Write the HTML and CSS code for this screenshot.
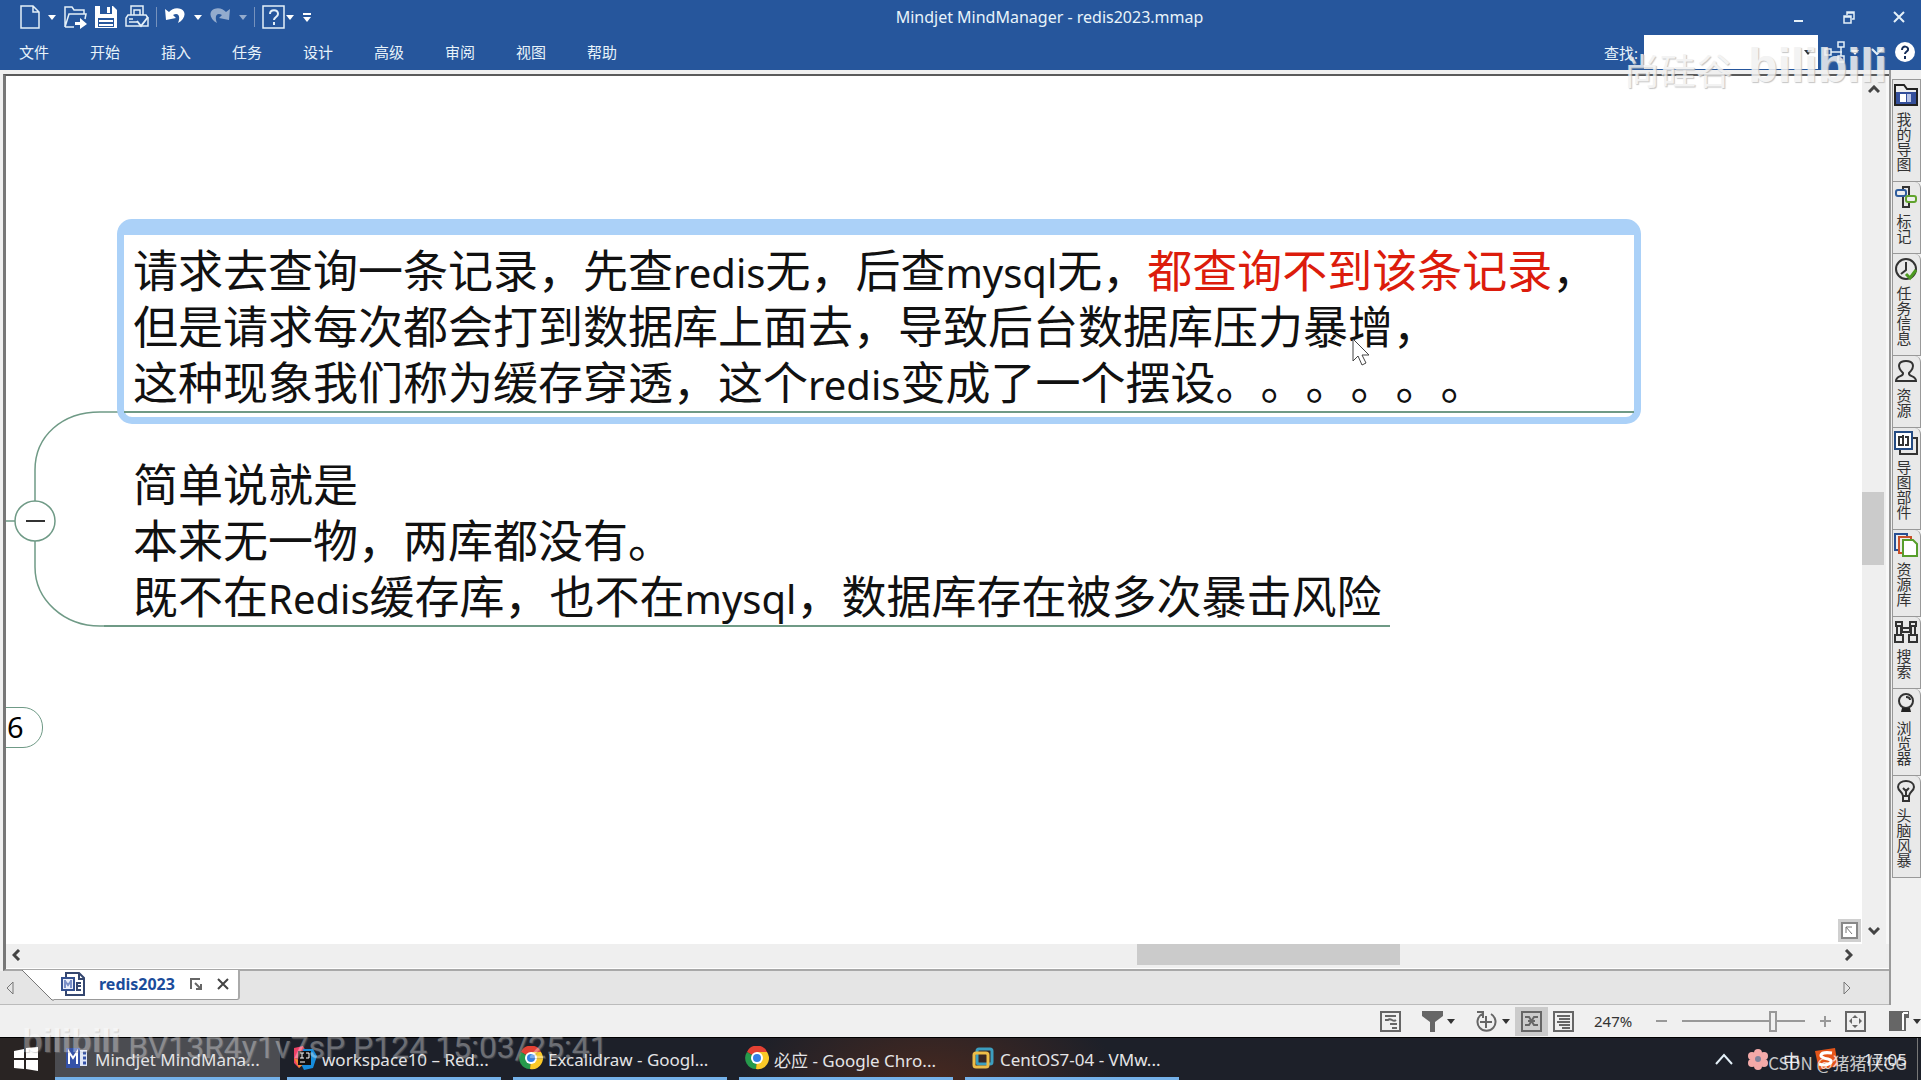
FILE: index.html
```html
<!DOCTYPE html>
<html lang="zh-CN">
<head>
<meta charset="utf-8">
<title>Mindjet MindManager - redis2023.mmap</title>
<link rel="stylesheet" href="styles.css">
</head>
<body>
<header class="ribbon">
  <div class="titlebar">
    <div class="quick">
      <button class="tool split" aria-label="新建"><svg width="20" height="24" viewBox="0 0 20 24"><path d="M1 1h12l6 6v16H1zM13 1v6h6" class="line"/></svg><i class="caret"></i></button>
      <button class="tool" aria-label="打开"><svg width="24" height="24" viewBox="0 0 24 24"><path d="M2 22V2h7l2 3h10v4M2 22L6 9h17l-1 5M2 22h9" class="line"/><path d="M12 17h5v-4l7 6-7 5v-4h-5z" class="solid"/></svg></button>
      <button class="tool" aria-label="保存"><svg width="24" height="24" viewBox="0 0 24 24"><path d="M1 1h18l4 4v18H1z" class="solid"/><path d="M6 1h12v8H6zM4 13h16v9H4z" class="blue"/><path d="M13 2h3v6h-3zM5 15h14v2H5zM5 19h14v2H5z" class="solid"/></svg></button>
      <button class="tool" aria-label="打印"><svg width="24" height="24" viewBox="0 0 24 24"><path d="M6 10V1h12v9M9 10V5h6v5M3 10h18l2 3v8H1v-8zM4 14h4M4 17h8" class="line"/><path d="M12 16l4 5 7-9" class="line thick"/></svg></button>
      <span class="rule"></span>
      <button class="tool split" aria-label="撤销"><svg width="22" height="20" viewBox="0 0 22 20"><path d="M1 2l1 11 10-2-3-3c5-3 8 1 5 8 7-4 9-11 3-14C12 0 8 2 5 5z" class="solid"/></svg><i class="caret"></i></button>
      <button class="tool split faded" aria-label="重做"><svg width="22" height="20" viewBox="0 0 22 20"><path d="M21 2l-1 11-10-2 3-3C8 5 5 9 8 16 1 12-1 5 5 2c5-2 9 0 12 3z" class="solid"/></svg><i class="caret"></i></button>
      <span class="rule"></span>
      <button class="tool split tight" aria-label="帮助主题"><svg width="23" height="24" viewBox="0 0 23 24"><path d="M1 1h21v22H1z" class="line"/><path d="M8 9c0-5 8-5 8 0 0 3-4 3-4 6M12 17v3" class="line thick"/></svg><i class="caret"></i></button>
      <button class="tool more" aria-label="自定义"><i class="dash"></i><i class="caret"></i></button>
    </div>
    <h1 class="title">Mindjet MindManager - redis2023.mmap</h1>
    <div class="window-buttons">
      <button aria-label="最小化"><svg width="12" height="14"><path d="M1 11h9" class="line thick"/></svg></button>
      <button aria-label="还原"><svg width="12" height="14" viewBox="0 0 12 14"><path d="M1 6h7v7H1zM1 7h7M4 5V2h7v7H9M4 3h7" class="line"/></svg></button>
      <button aria-label="关闭"><svg width="12" height="14" viewBox="0 0 12 14"><path d="M1 2l10 10M11 2L1 12" class="line thick"/></svg></button>
    </div>
  </div>
  <div class="menubar">
    <nav class="menu">
      <button>文件</button><button>开始</button><button>插入</button><button>任务</button><button>设计</button><button>高级</button><button>审阅</button><button>视图</button><button>帮助</button>
    </nav>
    <div class="find">
      <label for="find">查找:</label>
      <div class="findbox"><input id="find" type="text"><i class="caret dark"></i></div>
      <button class="tool split" aria-label="导图结构"><svg width="22" height="22" viewBox="0 0 22 22"><path d="M1 8h6v6H1zM14 1h6v5h-6zM14 15h6v6h-6zM7 11h11M17 6v9" class="line"/></svg><i class="caret"></i></button>
      <button class="tool" aria-label="折叠功能区"><svg width="12" height="8"><path d="M1 1l5 5 5-5" class="line thick"/></svg></button>
      <button class="tool" aria-label="帮助"><svg width="20" height="20" viewBox="0 0 20 20"><circle cx="10" cy="10" r="10" class="solid"/><path d="M7 8c0-5 7-4 6 0-1 2-3 2-3 4M10 14v3" class="navy"/></svg></button>
    </div>
  </div>
</header>

<div class="workspace">
  <main class="document">
    <div class="frame">
      <div class="viewport">
        <section class="map">
          <svg class="links" width="120" height="700" aria-hidden="true">
            <path d="M0 445h10M29 426v-32C29 360 56 336 94 336h20M29 464v27C29 524 58 550 94 550h20"/>
            <circle cx="29" cy="445" r="20"/><path d="M20 445h19" class="minus"/>
          </svg>
          <article class="topic selected">
            <p>请求去查询一条记录，先查<span>redis</span>无，后查<span>mysql</span>无，<em>都查询不到该条记录</em>，</p>
            <p>但是请求每次都会打到数据库上面去，导致后台数据库压力暴增，</p>
            <p>这种现象我们称为缓存穿透，这个<span>redis</span>变成了一个摆设。。。。。。</p>
          </article>
          <article class="topic plain">
            <p>简单说就是</p>
            <p>本来无一物，两库都没有。</p>
            <p>既不在<span>Redis</span>缓存库，也不在<span>mysql</span>，数据库存在被多次暴击风险</p>
          </article>
          <div class="count">6</div>
          <svg class="pointer" width="19" height="28" viewBox="0 0 19 28" aria-hidden="true"><path d="M1 1v22l5-5 4 9 4-2-4-8h7z"/></svg>
          <button class="corner" aria-label="导航"><svg width="17" height="17" viewBox="0 0 17 17"><path d="M1 1h15v15H1z" fill="#fff" stroke="#888" stroke-width="2"/><path d="M5 11V5h6M5 5l6 7" class="thin"/></svg></button>
        </section>
        <div class="vscroll"><svg width="12" height="9"><path d="M1 7l5-5 5 5" class="arrow"/></svg><div class="vtrack"><i class="thumb"></i></div><svg width="12" height="9"><path d="M1 2l5 5 5-5" class="arrow"/></svg></div>
      </div>
      <div class="hscroll"><svg width="9" height="12"><path d="M7 1L2 6l5 5" class="arrow"/></svg><div class="track"><i class="thumb"></i></div><svg width="9" height="12"><path d="M2 1l5 5-5 5" class="arrow"/></svg></div>
    </div>
    <div class="doctabs">
      <svg class="prev" width="8" height="14"><path d="M7 1v12L1 7z" class="thin"/></svg>
      <svg class="slope" width="32" height="31" viewBox="0 0 32 31"><path d="M0 0l30 30h2V0z" fill="#fff"/><path d="M0 0l30 30h2" class="thin"/></svg>
      <div class="doctab">
        <svg width="24" height="24" viewBox="0 0 24 24"><path d="M5 1h13l5 5v17H5z" fill="#fff" stroke="#34466f" stroke-width="2"/><path d="M18 1v6h5M20 11h-4v7h4M16 14h4" fill="none" stroke="#34466f" stroke-width="2"/><path d="M1 6h12v12H1z" fill="#e8edfa" stroke="#34508f" stroke-width="2"/><path d="M4 8v8M10 8v8M4 9l3 4 3-4" stroke="#7b90c8" stroke-width="2" fill="none"/></svg>
        <b>redis2023</b>
        <button aria-label="浮动"><svg width="12" height="12"><path d="M1 11V1h9M5 5l6 6M11 6v5H6" class="grey"/></svg></button>
        <button aria-label="关闭文档"><svg width="12" height="12"><path d="M1 1l10 10M11 1L1 11" stroke="#444" stroke-width="2"/></svg></button>
      </div>
      <svg class="next" width="8" height="14"><path d="M1 1v12l6-6z" class="thin"/></svg>
    </div>
  </main>
  <aside class="panels">
    <button><svg width="24" height="24" viewBox="0 0 24 24"><path d="M1 22V2h9l3 4h10v16z" fill="#eee" stroke="#222" stroke-width="2"/><path d="M2 9h20v12H2z" fill="#344f9b"/><path d="M6 11h6v8H6z" fill="#fff"/><path d="M13 11h4v8h-4z" fill="#b9c4e6"/></svg><span>我的导图</span></button>
    <button><svg width="24" height="24" viewBox="0 0 24 24"><path d="M9 2h6v20H9z" class="ico"/><rect x="2" y="5" width="10" height="6" rx="2" fill="#eee" stroke="#2f5d9d" stroke-width="2"/><rect x="12" y="11" width="10" height="6" rx="2" fill="#eee" stroke="#61a32e" stroke-width="2"/></svg><span>标记</span></button>
    <button><svg width="24" height="24" viewBox="0 0 24 24"><circle cx="12" cy="12" r="10" class="ico"/><path d="M12 5v8l-5 4" class="ico"/><path d="M12 17l4 4 6-8" fill="none" stroke="#4c9a20" stroke-width="3"/></svg><span>任务信息</span></button>
    <button><svg width="24" height="24" viewBox="0 0 24 24"><path d="M2 22c0-6 8-4 7-8-7-7-4-12 3-12s10 5 3 12c-1 4 7 2 7 8z" class="ico"/></svg><span>资源</span></button>
    <button><svg width="24" height="24" viewBox="0 0 24 24"><path d="M6 7h17v16H6z" class="ico"/><path d="M1 1h17v17H1z" fill="#fff" stroke="#244b83" stroke-width="2"/><path d="M8 6H5v8h3M11 6h3v8h-3M9 4v11" class="ico"/></svg><span>导图部件</span></button>
    <button><svg width="24" height="24" viewBox="0 0 24 24"><path d="M1 1h12v16H1z" fill="#eee" stroke="#294f92" stroke-width="2"/><path d="M5 4h12v16H5z" fill="#eee" stroke="#c8512b" stroke-width="2"/><path d="M9 7h10l4 4v12H9z" fill="#fff" stroke="#579e2b" stroke-width="2"/></svg><span>资源库</span></button>
    <button><svg width="24" height="24" viewBox="0 0 24 24"><path d="M2 2h6v4H2zM16 2h6v4h-6zM3 6h4v9H3zM17 6h4v9h-4zM1 15h8v7H1zM15 15h8v7h-8zM8 8h8v4H8z" class="ico"/></svg><span>搜索</span></button>
    <button><svg width="24" height="24" viewBox="0 0 24 24"><circle cx="12" cy="9" r="7" class="ico"/><path d="M12 5c2 0 4 1 4 3" class="ico"/><path d="M8 16h8l1 4H7z" fill="#222"/></svg><span>浏览器</span></button>
    <button><svg width="24" height="24" viewBox="0 0 24 24"><path d="M9 17c0-4-5-5-5-9 0-8 16-8 16 0 0 4-5 5-5 9zM9 17v5h6v-5M9 9l3 3 3-3M12 12v5" class="ico"/></svg><span>头脑风暴</span></button>
  </aside>
</div>

<footer class="status">
  <button aria-label="备注"><svg width="21" height="21" viewBox="0 0 21 21"><path d="M1 1h19v19H1zM5 5h11M5 9h3c3-3 5 3 8 0M10 13h7M12 17h5" class="grey"/></svg></button>
  <button class="filter" aria-label="筛选"><svg width="21" height="21"><path d="M0 0h21v5l-8 6v10H8V11L0 5z" fill="#666"/></svg><i class="caret dark"></i></button>
  <button class="rotate" aria-label="显示"><svg width="23" height="23" viewBox="0 0 23 23"><path d="M7 4a9 9 0 1 0 9 0M2 2h6v6M11 6v12M5 12h12" class="grey"/></svg><i class="caret dark"></i></button>
  <button class="pressed" aria-label="导图视图"><svg width="21" height="21" viewBox="0 0 21 21"><path d="M1 1h19v19H1zM4 6h4l5 8h4M4 14h4l5-8h4M7 10h7" class="grey"/></svg></button>
  <button aria-label="大纲视图"><svg width="21" height="21" viewBox="0 0 21 21"><path d="M1 1h19v19H1zM4 5h13M6 8h11M4 11h13M6 14h11M9 17h8" class="grey"/></svg></button>
  <output class="percent">247%</output>
  <button aria-label="缩小"><svg width="11" height="11"><path d="M0 5h11" class="faint"/></svg></button>
  <input class="zoom" type="range" min="0" max="100" value="76" aria-label="缩放">
  <button aria-label="放大"><svg width="11" height="11"><path d="M0 5h11M5 0v11" class="faint"/></svg></button>
  <button class="fit" aria-label="适合窗口"><svg width="21" height="21" viewBox="0 0 21 21"><path d="M1 1h19v19H1z" class="grey"/><path d="M10 4l3 3H7zM10 17l3-3H7zM4 10l3-3v6zM17 10l-3-3v6z" fill="#666"/></svg></button>
  <button class="pane" aria-label="任务窗格"><svg width="20" height="20"><path d="M0 0h20v7h-3v13H0z" fill="#666"/><path d="M14 2v17M14 2h5" stroke="#fff" stroke-width="2"/></svg><i class="caret dark"></i></button>
</footer>

<div class="taskbar">
  <button class="start" aria-label="开始菜单"><svg width="24" height="24" viewBox="0 0 24 24"><path d="M0 4l10-2v9H0zM12 1l12-1v11H12zM0 13h10v9L0 21zM12 13h12v11l-12-2z" fill="#fff"/></svg></button>
  <button class="task active"><svg width="24" height="24" viewBox="0 0 24 24"><path d="M0 2h14v20H0z" fill="#3552a8"/><path d="M3 18V6l4 6 4-6v12" fill="none" stroke="#fff" stroke-width="2"/><path d="M14 4h7v16h-7z" fill="#dfe6f6"/><path d="M17 7h3M17 12h3M17 17h3" stroke="#3552a8" stroke-width="3"/></svg><span>Mindjet MindMana...</span></button>
  <button class="task"><svg width="24" height="24" viewBox="0 0 24 24"><path d="M1 2l9-2 4 7-8 15-5-5z" fill="#ee4264"/><path d="M10 3h10l4 7-4 12-9 2-3-6z" fill="#168ddd"/><path d="M1 12l5 10 6-5z" fill="#f48c35"/><path d="M5 5h13v14H5z" fill="#111"/><path d="M7 7h4M9 7v5M7 12h4M13 7h3v5h-3M7 16h5" fill="none" stroke="#fff"/></svg><span>workspace10 – Red...</span></button>
  <button class="task"><svg width="24" height="24" viewBox="0 0 24 24"><use href="#chrome"/></svg><span>Excalidraw - Googl...</span></button>
  <button class="task"><svg width="24" height="24" viewBox="0 0 24 24"><g id="chrome"><path d="M12 12L2 6a11 11 0 0 1 20 0z" fill="#e34133"/><path d="M12 12L2 6a11 11 0 0 0 9 17z" fill="#269a4c"/><path d="M12 12l-1 11A11 11 0 0 0 22 6H12z" fill="#fbc927"/><circle cx="12" cy="12" r="6" fill="#fff"/><circle cx="12" cy="12" r="4" fill="#347fe6"/></g></svg><span>必应 - Google Chro...</span></button>
  <button class="task"><svg width="24" height="24" viewBox="0 0 24 24"><rect x="6" y="3" width="15" height="15" rx="2" fill="none" stroke="#3c9ebf" stroke-width="3"/><rect x="3" y="7" width="14" height="14" rx="2" fill="none" stroke="#edbd48" stroke-width="3"/></svg><span>CentOS7-04 - VMw...</span></button>
  <div class="tray">
    <svg width="18" height="12"><path d="M1 11l8-9 8 9" class="line thick"/></svg>
    <svg width="22" height="22" viewBox="0 0 22 22"><g fill="#f4a9a8"><circle cx="11" cy="5" r="4"/><circle cx="5" cy="8" r="4"/><circle cx="17" cy="8" r="4"/><circle cx="5" cy="15" r="4"/><circle cx="17" cy="15" r="4"/><circle cx="11" cy="18" r="4"/><circle cx="11" cy="11" r="5"/></g><circle cx="11" cy="11" r="3" fill="#80829b"/></svg>
    <span class="ime">中</span>
    <svg width="24" height="22" viewBox="0 0 24 22"><path d="M1 3l20-3 3 18-19 4z" fill="#e45519"/><path d="M18 5c-14-2-14 5-4 6 8 2 0 8-9 5" fill="none" stroke="#fff" stroke-width="3"/></svg>
    <time class="clock">17:05</time>
  </div>
</div>

<div class="mark author">尚硅谷</div>
<div class="mark brand-top">bilibili</div>
<div class="mark brand-bottom"><b>bilibili</b><span>BV13R4y1v7sP P124 15:03/25:41</span></div>
<div class="mark credit">CSDN @猪猪侠GG</div>
</body>
</html>
```
FILE: styles.css
```css
* { box-sizing: border-box; }
body {
  margin: 0;
  position: relative;
  height: 100vh;
  display: flex;
  flex-direction: column;
  overflow: hidden;
  background: #f0f0f0;
  font-family: "Noto Sans", "Noto Sans CJK SC", sans-serif;
  font-size: 15px;
}
button {
  border: 0;
  padding: 0;
  margin: 0;
  background: none;
  color: inherit;
  font: inherit;
  display: flex;
  align-items: center;
}
svg { display: block; flex: none; }
.line, .arrow, .grey, .thin, .faint, .navy { fill: none; stroke-width: 2; }
.line { stroke: #e4f0f8; }
.line:not(.thick) { stroke-width: 1.5; }
.solid { fill: #fff; }
.blue { fill: #26569c; }
.navy { stroke: #152d59; }
.arrow { stroke: #444; stroke-width: 3; }
.grey { stroke: #666; }
.thin { stroke: #777; stroke-width: 1; }
.faint { stroke: #999; }
.ico { fill: none; stroke: #333; stroke-width: 2; }
.caret {
  width: 0;
  height: 0;
  border: 4px solid transparent;
  border-top: 5px solid #fff;
  border-bottom: 0;
}
.caret.dark { border-top-color: #333; }

/* Ribbon */
.ribbon { background: #26569c; color: #e8f3fa; height: 70px; flex: none; }
.titlebar { display: grid; grid-template-columns: 1fr auto 1fr; align-items: center; height: 34px; padding: 0 16px 0 20px; }
.quick { display: flex; align-items: center; gap: 7px; height: 30px; }
.split { gap: 8px; }
.split.tight { gap: 1px; }
.faded { opacity: .5; }
.rule { width: 1px; height: 20px; background: #7692bd; }
.more { flex-direction: column; gap: 2px; margin-left: 2px; }
.dash { width: 8px; height: 2px; background: #fff; }
.title { margin: 0 0 0 174px; font-size: 16px; font-weight: 400; line-height: 30px; white-space: nowrap; }
.window-buttons { display: flex; justify-content: flex-end; gap: 38px; }
.menubar { display: flex; justify-content: space-between; height: 36px; }
.menu { display: flex; align-items: center; padding-left: 19px; }
.menu button { width: 71px; font-family: "Noto Sans CJK SC", sans-serif; line-height: 36px; }
.find { display: flex; align-items: center; gap: 6px; padding-right: 6px; }
.find .tool { margin-right: 6px; }
.find .tool:last-child { margin: 0; }
.find .split { gap: 5px; }
.findbox { display: flex; align-items: center; background: #fff; width: 174px; height: 34px; padding-right: 6px; }
.findbox input { border: 0; padding: 0 6px; flex: 1; min-width: 0; background: none; outline: 0; }

/* Work area */
.workspace { flex: 1; min-height: 0; display: flex; }
.document { flex: 1; min-width: 0; display: flex; flex-direction: column; border-right: 2px solid #999; }
.frame {
  flex: 1;
  min-height: 0;
  display: flex;
  flex-direction: column;
  margin-top: 4px;
  margin-left: 3px;
  border-top: 2px solid #5a5a5a;
  border-left: 3px solid #777;
  border-bottom: 2px solid #a8a8a8;
}
.viewport { flex: 1; min-height: 0; display: flex; }
.map { flex: 1; min-width: 0; position: relative; overflow: hidden; background: #fff; }
.vscroll { width: 27px; padding: 9px 0; display: flex; flex-direction: column; align-items: center; background: #efefef; border-right: 3px solid #f8f8f8; }
.vtrack { flex: 1; width: 100%; display: flex; flex-direction: column; }
.vtrack::before { content: ""; flex: 21; }
.vtrack::after { content: ""; flex: 19; }
.vtrack .thumb { height: 73px; margin-right: 2px; background: #cbcbcb; }
.hscroll { display: flex; align-items: center; height: 25px; padding: 0 36px 3px 6px; background: #efefef; border-bottom: 1px solid #fff; }
.hscroll .track { flex: 1; display: flex; height: 21px; padding-left: calc(61% - 7px); }
.hscroll .thumb { width: 263px; background: #cbcbcb; }

/* Mind map */
.links { position: absolute; left: 0; top: 0; fill: none; stroke: #6f9a86; stroke-width: 2; }
.links path:not(.minus), .links circle { stroke-width: 1.5; }
.links circle { fill: #fff; }
.links .minus { stroke: #333; }
.topic { position: absolute; font-family: "Noto Sans CJK SC", sans-serif; font-size: 45px; color: #111; white-space: nowrap; text-spacing-trim: space-all; }
.topic p { margin: 0; height: 56px; line-height: 56px; }
.topic span { font-family: "Noto Sans", sans-serif; font-size: 40px; line-height: 40px; }
.topic em { font-style: normal; color: #dc1c0c; }
.selected { left: 111px; top: 143px; width: 1524px; height: 205px; padding: 6px 9px; border: 7px solid #abd1f8; border-top-width: 16px; border-radius: 15px; }
.selected::before { content: ""; position: absolute; inset: -4px -2px -2px; border: 4px solid #abd1f8; border-radius: 12px; z-index: -1; }
.selected::after { content: ""; position: absolute; left: 0; right: 0; bottom: 4px; height: 2px; background: #6f9a86; }
.plain { left: 98px; top: 379px; width: 1286px; height: 172px; padding: 0 29px; border-bottom: 2px solid #6f9a86; }
.count { position: absolute; left: -20px; top: 631px; width: 57px; height: 41px; padding-left: 20px; border: 1px solid #6f9a86; border-radius: 20px; font-size: 29px; line-height: 38px; }
.pointer { position: absolute; left: 1346px; top: 262px; fill: #fff; stroke: #444; }
.corner { position: absolute; right: 1px; bottom: 2px; padding: 3px; background: #d0d0d0; }

/* Document tabs */
.doctabs { height: 34px; display: flex; align-items: flex-start; background: #e5e5e5; border-bottom: 1px solid #bbb; }
.prev { margin: 10px 8px 0 6px; }
.slope { margin-top: -1px; }
.doctab { height: 30px; margin-top: -1px; display: flex; align-items: center; gap: 15px; padding: 0 9px 2px 7px; background: #fff; border-right: 2px solid #aaa; border-bottom: 1px solid #999; border-bottom-right-radius: 3px; color: #1b4c9b; font-size: 16px; }
.doctab b { margin-left: -1px; }
.next { margin: 10px 38px 0 auto; }

/* Side panels */
.panels { width: 30px; padding: 9px 0 0 1px; display: flex; flex-direction: column; }
.panels button {
  flex-direction: column;
  gap: 5px;
  padding: 3px 2px 9px 0;
  background: #e9e9e9;
  border: 1px solid #999;
  border-top: 0;
  color: #333;
}
.panels button:first-child { border-top: 1px solid #999; }
.panels button:not(:first-child) { border-top-right-radius: 6px; }
.panels span { writing-mode: vertical-rl; margin-right: 4px; font-family: "Noto Sans CJK SC", sans-serif; font-size: 15px; line-height: 20px; }

/* Status bar */
.status { height: 33px; flex: none; display: flex; align-items: center; justify-content: flex-end; border-bottom: 1px solid #000; }
.status button { gap: 4px; }
.filter { margin-left: 21px; }
.rotate { margin: 0 5px 0 20px; }
.status .pressed { background: #cbcbcb; padding: 4px 6px; margin-right: 5px; }
.percent { width: 62px; margin-left: 20px; color: #333; }
.zoom { appearance: none; width: 123px; height: 20px; margin: 0 15px; background: linear-gradient(#999, #999) center / 100% 2px no-repeat; }
.zoom::-webkit-slider-thumb { appearance: none; width: 8px; height: 21px; background: #f0f0f0; border: 2px solid #999; }
.fit { margin: 0 23px 0 14px; }

/* Taskbar */
.taskbar { height: 42px; flex: none; display: flex; color: #e4e4e6; background: radial-gradient(ellipse 190px 110px at 930px 50px, #49291f, transparent), #1d2029; }
.start { width: 55px; padding-left: 14px; background: #292423; }
.task { width: 214px; margin-right: 12px; padding: 0 0 0 6px; gap: 5px; border-bottom: 3px solid #74b1e9; font-size: 17px; white-space: nowrap; }
.task.active { width: 225px; margin-right: 7px; padding-left: 11px; background: #4b4c51; }
.task span { padding-top: 3px; }
.tray { margin-left: auto; display: flex; align-items: center; gap: 14px; padding-right: 10px; border-right: 1px solid #777; margin-right: 3px; }
.ime { font-size: 17px; }
.clock { width: 55px; text-align: right; font-size: 17px; }

/* Overlaid captions */
.mark { position: absolute; white-space: nowrap; pointer-events: none; color: #fff; }
.author { right: 189px; top: 48px; font: 36px/42px "Noto Sans CJK SC", sans-serif; color: #f1f1f1; text-shadow: 1px 1px 1px #bbb; opacity: .85; }
.brand-top { right: 34px; top: 34px; font: bold 48px/64px "Liberation Sans", sans-serif; color: #f1f1f1; text-shadow: 1px 1px 1px #bbb; opacity: .85; }
.brand-bottom { left: 22px; bottom: 16px; display: flex; align-items: flex-end; gap: 8px; opacity: .35; text-shadow: 1px 1px 1px #888; }
.brand-bottom b { font: bold 34px/48px "Liberation Sans", sans-serif; }
.brand-bottom span { font: 32px/34px Roboto, sans-serif; }
.credit { right: 14px; bottom: 4px; font: 17px/26px "Noto Sans CJK SC", sans-serif; opacity: .75; }
```
